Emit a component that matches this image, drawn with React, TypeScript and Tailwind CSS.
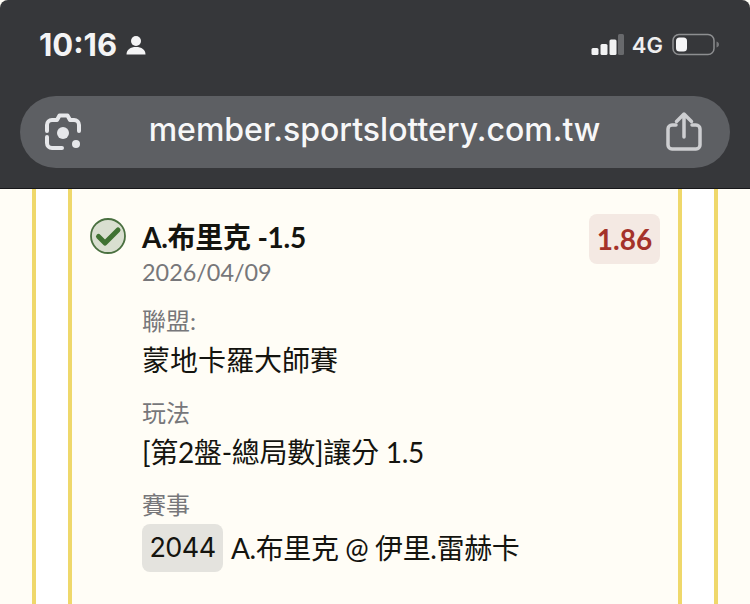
const cjk = "font-['Lato','Noto_Sans_CJK_TC','Noto_Sans_CJK_JP',sans-serif]";

function Signal() {
  return (
    <svg width="34" height="22" viewBox="0 0 34 22" className="block">
      <rect x="0.5" y="14" width="7" height="7" rx="1.5" fill="#f2f2f3" />
      <rect x="9.5" y="10" width="7" height="11" rx="1.5" fill="#f2f2f3" />
      <rect x="18.5" y="5.5" width="7" height="15.5" rx="1.5" fill="#f2f2f3" />
      <rect x="27" y="0" width="6" height="21" rx="1.5" fill="#68696c" />
    </svg>
  );
}

function Battery() {
  return (
    <svg width="48" height="24" viewBox="0 0 48 24" className="block">
      <rect x="1" y="1.5" width="41" height="20" rx="6" fill="none" stroke="#8d8e90" strokeWidth="1.5" />
      <rect x="4" y="4.5" width="11" height="14" rx="3.5" fill="#f6f6f7" />
      <path d="M44.5 8.5c1.8.6 2.5 1.8 2.5 3s-.7 2.4-2.5 3z" fill="#77787a" />
    </svg>
  );
}

function Lens() {
  return (
    <svg width="40" height="40" viewBox="0 0 40 40" className="block">
      <path d="M4 19v-6a5 5 0 0 1 5-5h5l2.500-4.500h8L27 8h4a5 5 0 0 1 5 5v6" fill="none" stroke="#e6e7ea" strokeWidth="4" strokeLinecap="round" strokeLinejoin="round" />
      <path d="M4 25v6a5 5 0 0 0 5 5h10" fill="none" stroke="#e6e7ea" strokeWidth="4" strokeLinecap="round" />
      <circle cx="20" cy="21" r="6" fill="#e6e7ea" />
      <circle cx="33" cy="32" r="4" fill="#e6e7ea" />
    </svg>
  );
}

function Share() {
  return (
    <svg width="40" height="44" viewBox="0 0 40 44" className="block">
      <path d="M12 15H8a4 4 0 0 0-4 4v16a4 4 0 0 0 4 4h24a4 4 0 0 0 4-4V19a4 4 0 0 0-4-4h-4" fill="none" stroke="#cdced1" strokeWidth="3.500" strokeLinecap="round" />
      <path d="M20 27V5M12.500 11.500 20 4l7.500 7.500" fill="none" stroke="#cdced1" strokeWidth="3.500" strokeLinecap="round" strokeLinejoin="round" />
    </svg>
  );
}

function Check() {
  return (
    <svg width="38" height="38" viewBox="0 0 38 38" className="block">
      <circle cx="18" cy="18" r="17" fill="#d9dfd0" stroke="#4a7040" strokeWidth="1.800" />
      <path d="M8.500 18.500 15 25 28 12" fill="none" stroke="#3f7232" strokeWidth="5" strokeLinecap="round" strokeLinejoin="round" />
    </svg>
  );
}

export default function App() {
  return (
    <div className="w-[750px] h-[604px] overflow-hidden bg-[#fffdf6] flex flex-col font-['Inter','Liberation_Sans',sans-serif]">
      <header className="h-[189px] shrink-0 bg-[#36373a] border-b border-[#17171a] rounded-t-[8px] px-5 flex flex-col">
        <div className="h-[96px] shrink-0 flex items-start justify-between">
          <div className="flex items-center gap-[9px] pl-[19px] pt-[28px]">
            <span className="text-[31px] leading-[34px] font-bold text-[#f4f4f5]">10:16</span>
            <svg width="20" height="20" viewBox="0 0 20 20" className="block">
              <circle cx="10" cy="6" r="5" fill="#f4f4f5" />
              <path d="M0.500 19.500c0-5 4-7.500 9.500-7.500s9.500 2.500 9.500 7.500z" fill="#f4f4f5" />
            </svg>
          </div>
          <div className="flex items-center pt-[33px] pr-[10px]">
            <Signal />
            <span className="ml-[7px] text-[22px] leading-[24px] font-semibold text-[#eeeeef]">4G</span>
            <span className="ml-[9px]"><Battery /></span>
          </div>
        </div>
        <div className="w-[710px] h-[72px] bg-[#5d5f63] rounded-[36px] flex items-center justify-between pl-[23px] pr-[26px]">
          <Lens />
          <span className="mb-[4px] ml-[2px] text-[32px] leading-[40px] font-medium text-[#f7f7f8]">member.sportslottery.com.tw</span>
          <Share />
        </div>
      </header>
      <main className="flex-1 pl-[32px] pr-[32px]">
        <div className="h-full border-x-4 border-[#efd86b] bg-white px-[32px]">
          <div className={`h-full border-x-4 border-[#efd86b] bg-[#fffdf6] pl-[18px] pr-[18px] pt-[25px] ${cjk}`}>
            <div className="flex items-start justify-between">
              <div className="flex items-start gap-[14px]">
                <span className="mt-[4px]"><Check /></span>
                <div>
                  <div className="pt-px text-[28px] leading-[44px] font-bold text-[#14140f] tracking-[-0.25px]">A.布里克 -1.5</div>
                  <div className="text-[23.4px] leading-[27px] text-[#77777a]">2026/04/09</div>
                </div>
              </div>
              <div className="h-[50px] w-[71px] rounded-[8px] bg-[#f4e9e3] flex items-center justify-center text-[28px] font-bold text-[#a4322a]">1.86</div>
            </div>
            <div className="pl-[52px]">
              <div className="mt-[20px] text-[24px] leading-[30px] text-[#77777a]">聯盟:</div>
              <div className="mt-[4px] text-[28px] leading-[40px] text-[#14140f]">蒙地卡羅大師賽</div>
              <div className="mt-[18px] text-[24px] leading-[30px] text-[#77777a]">玩法</div>
              <div className="mt-[4px] text-[28px] leading-[40px] text-[#14140f] tracking-[-0.27px]">[第2盤-總局數]讓分 1.5</div>
              <div className="mt-[18px] text-[24px] leading-[30px] text-[#77777a]">賽事</div>
              <div className="mt-[4px] flex items-center gap-[8px] text-[28px] text-[#14140f]">
                <span className="h-[48px] w-[81px] rounded-[8px] bg-[#e4e3de] flex items-center justify-center font-['Inter',sans-serif] text-[27px] tracking-[-0.6px]">2044</span>
                <span className="tracking-[-0.4px]">A.布里克 @ 伊里.雷赫卡</span>
              </div>
            </div>
          </div>
        </div>
      </main>
    </div>
  );
}
